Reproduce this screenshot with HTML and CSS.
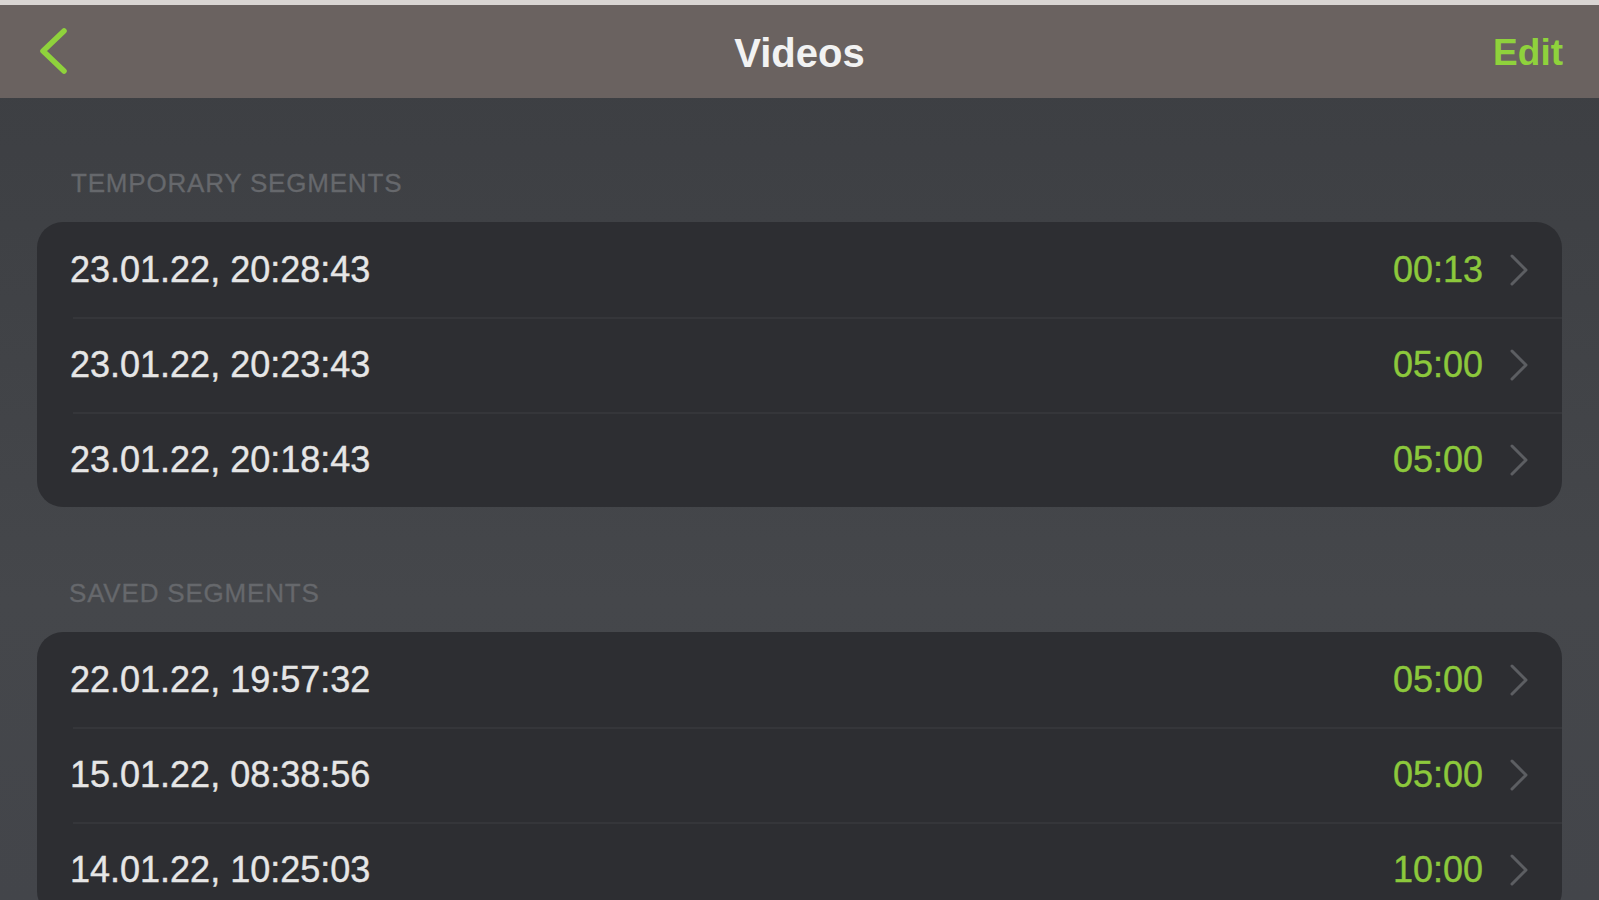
FILE: index.html
```html
<!DOCTYPE html>
<html>
<head>
<meta charset="utf-8">
<link rel="stylesheet" href="styles.css">
</head>
<body>
<div class="topstrip"></div>
<header class="navbar">
  <div class="nav-left">
    <svg class="back" width="34" height="50" viewBox="0 0 34 50"><path d="M28 5 L7 25 L28 45" fill="none" stroke="#8fd23c" stroke-width="5.5" stroke-linecap="round" stroke-linejoin="round"/></svg>
  </div>
  <div class="title">Videos</div>
  <div class="nav-right"><span class="edit">Edit</span></div>
</header>
<main class="content">
  <section class="section">
    <div class="section-title">TEMPORARY SEGMENTS</div>
    <div class="card">
      <div class="row"><span class="date">23.01.22, 20:28:43</span><span class="dur">00:13</span><svg class="chev" width="20" height="32" viewBox="0 0 20 32"><path d="M3 2 L17 16 L3 30" fill="none" stroke="#5c5e62" stroke-width="3" stroke-linecap="round" stroke-linejoin="round"/></svg></div>
      <div class="row"><span class="date">23.01.22, 20:23:43</span><span class="dur">05:00</span><svg class="chev" width="20" height="32" viewBox="0 0 20 32"><path d="M3 2 L17 16 L3 30" fill="none" stroke="#5c5e62" stroke-width="3" stroke-linecap="round" stroke-linejoin="round"/></svg></div>
      <div class="row"><span class="date">23.01.22, 20:18:43</span><span class="dur">05:00</span><svg class="chev" width="20" height="32" viewBox="0 0 20 32"><path d="M3 2 L17 16 L3 30" fill="none" stroke="#5c5e62" stroke-width="3" stroke-linecap="round" stroke-linejoin="round"/></svg></div>
    </div>
  </section>
  <section class="section second">
    <div class="section-title">SAVED SEGMENTS</div>
    <div class="card">
      <div class="row"><span class="date">22.01.22, 19:57:32</span><span class="dur">05:00</span><svg class="chev" width="20" height="32" viewBox="0 0 20 32"><path d="M3 2 L17 16 L3 30" fill="none" stroke="#5c5e62" stroke-width="3" stroke-linecap="round" stroke-linejoin="round"/></svg></div>
      <div class="row"><span class="date">15.01.22, 08:38:56</span><span class="dur">05:00</span><svg class="chev" width="20" height="32" viewBox="0 0 20 32"><path d="M3 2 L17 16 L3 30" fill="none" stroke="#5c5e62" stroke-width="3" stroke-linecap="round" stroke-linejoin="round"/></svg></div>
      <div class="row"><span class="date">14.01.22, 10:25:03</span><span class="dur">10:00</span><svg class="chev" width="20" height="32" viewBox="0 0 20 32"><path d="M3 2 L17 16 L3 30" fill="none" stroke="#5c5e62" stroke-width="3" stroke-linecap="round" stroke-linejoin="round"/></svg></div>
    </div>
  </section>
</main>
</body>
</html>
```
FILE: styles.css
```css
html, body {
  margin: 0;
  padding: 0;
}
body {
  width: 1599px;
  height: 900px;
  overflow: hidden;
  font-family: "Liberation Sans", Arial, sans-serif;
  background: linear-gradient(180deg, #3c3e42 0px, #404246 300px, #45474b 600px, #43454a 900px);
}
.topstrip {
  height: 5px;
  background: #d9d5d3;
}
.navbar {
  height: 93px;
  background: #6a6260;
  display: grid;
  grid-template-columns: 1fr auto 1fr;
  align-items: center;
}
.nav-left {
  display: flex;
  align-items: center;
  padding-left: 36px;
}
.back {
  display: block;
  margin-top: -2px;
}
.title {
  color: #f2f2f2;
  font-weight: bold;
  font-size: 40px;
  padding-top: 3px;
}
.nav-right {
  display: flex;
  justify-content: flex-end;
  padding-right: 36px;
  padding-top: 3px;
}
.edit {
  color: #8fd23c;
  font-weight: bold;
  font-size: 37px;
}
.content {
  padding: 70px 37px 0 37px;
}
.section-title {
  color: #66686c;
  font-size: 26px;
  line-height: 30px;
  letter-spacing: 0.8px;
  padding-left: 34px;
  margin-bottom: 24px;
  -webkit-text-stroke: 0.3px currentColor;
}
.second {
  margin-top: 71px;
}
.second .section-title {
  padding-left: 32px;
}
.card {
  background: #2d2e32;
  border-radius: 26px;
  overflow: hidden;
}
.row {
  height: 95px;
  display: flex;
  align-items: center;
  padding: 0 33px 0 33px;
  position: relative;
}
.row + .row::before {
  content: "";
  position: absolute;
  left: 36px;
  right: 0;
  top: 0;
  height: 2px;
  background: #35363a;
}
.date {
  color: #e6e6e6;
  font-size: 36px;
  flex: 1;
  -webkit-text-stroke: 0.4px currentColor;
}
.dur {
  color: #8cc83c;
  font-size: 36px;
  margin-right: 26px;
  -webkit-text-stroke: 0.4px currentColor;
}
.chev {
  display: block;
}
```
